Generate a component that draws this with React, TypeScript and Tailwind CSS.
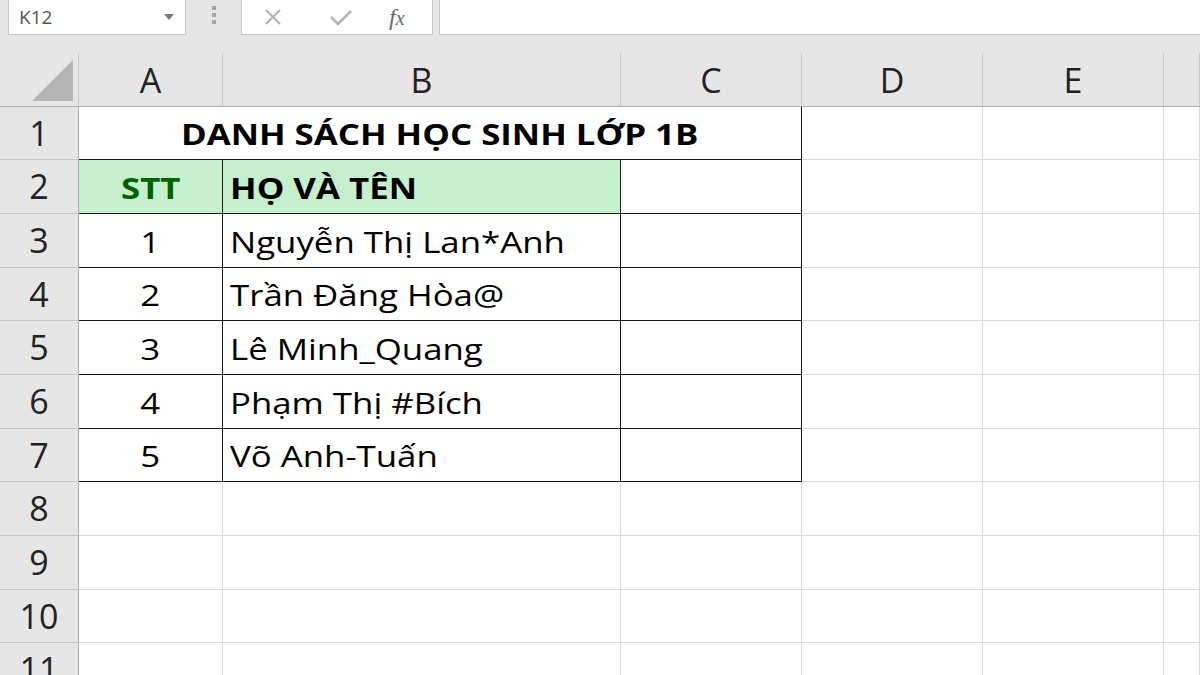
import React from "react";

const HEAD_FONT = { fontFamily: '"Open Sans", "Noto Sans", sans-serif' };
const CELL_FONT = { fontFamily: '"Open Sans", "Noto Sans", sans-serif' };

const rowHeights = ["h-[53px]", "h-[54px]", "h-[54px]", "h-[53px]", "h-[54px]", "h-[54px]", "h-[53px]", "h-[54px]", "h-[54px]", "h-[53px]", "h-[54px]"];

const students = [
  { stt: "1", name: "Nguyễn Thị Lan*Anh" },
  { stt: "2", name: "Trần Đăng Hòa@" },
  { stt: "3", name: "Lê Minh_Quang" },
  { stt: "4", name: "Phạm Thị #Bích" },
  { stt: "5", name: "Võ Anh-Tuấn" },
];

function RowHead({ n }: { n: number }) {
  return (
    <div
      className="w-[79px] shrink-0 flex items-center justify-center bg-[#e6e6e6] border-r border-[#ababab] border-b border-b-[#c4c4c4] text-[34px] text-[#222]"
      style={HEAD_FONT}
    >
      {n}
    </div>
  );
}

// the sheet is zoomed and a bit stretched, so cell text is widened
function Wide({ children, left }: { children: React.ReactNode; left?: boolean }) {
  return (
    <span className={"inline-block whitespace-nowrap scale-x-[1.2] " + (left ? "origin-left" : "origin-center")}>
      {children}
    </span>
  );
}

function EmptyCells({ widths }: { widths: string[] }) {
  return (
    <>
      {widths.map((w, i) => (
        <div key={i} className={w + " shrink-0 border-r border-b border-[#d9d9d9] bg-white"} />
      ))}
    </>
  );
}

export default function App() {
  const tail = ["w-[181px]", "w-[181px]", "w-[181px]"];
  return (
    <div className="w-[1200px] h-[675px] overflow-hidden bg-[#e6e6e6] flex flex-col">
      {/* Formula bar */}
      <div className="h-[36px] flex items-stretch shrink-0">
        <div className="ml-[8px] w-[178px] h-[35px] bg-white border border-t-0 border-[#c6c6c6] flex items-center justify-between px-[10px]">
          <span className="text-[19px] text-[#555]" style={HEAD_FONT}>K12</span>
          <svg width="12" height="8" viewBox="0 0 12 8"><path d="M1 1 L11 1 L6 7 Z" fill="#777" /></svg>
        </div>
        <div className="w-[55px] flex flex-col items-center pt-[6px] gap-[3px]">
          <div className="w-[4px] h-[4px] bg-[#a6a6a6]" />
          <div className="w-[4px] h-[4px] bg-[#a6a6a6]" />
          <div className="w-[4px] h-[4px] bg-[#a6a6a6]" />
        </div>
        <div className="w-[192px] h-[35px] bg-white border border-t-0 border-[#c6c6c6] flex items-center">
          <svg className="ml-[21px]" width="20" height="20" viewBox="0 0 20 20">
            <path d="M3 3 L17 17 M17 3 L3 17" stroke="#b3b3b3" strokeWidth="2" fill="none" />
          </svg>
          <svg className="ml-[46px]" width="24" height="20" viewBox="0 0 24 20">
            <path d="M2 10 L9 17 L22 4" stroke="#b3b3b3" strokeWidth="2.6" fill="none" />
          </svg>
          <span className="ml-[36px] text-[24px] leading-none italic text-[#6b6b6b]" style={{ fontFamily: '"Liberation Serif", serif' }}>
            f<span className="text-[20px]">x</span>
          </span>
        </div>
        <div className="ml-[6px] flex-1 h-[35px] bg-white border-l border-b border-[#c6c6c6]" />
      </div>
      <div className="h-[17px] shrink-0" />

      {/* Column header */}
      <div className="h-[54px] shrink-0 flex border-b border-[#ababab] text-[34px] text-[#222]" style={HEAD_FONT}>
        <div className="w-[79px] shrink-0 relative border-r border-[#c8c8c8]">
          <svg className="absolute left-[32px] top-[7px]" width="42" height="42" viewBox="0 0 42 42">
            <path d="M0 41 L41 0 L41 41 Z" fill="#b4b4b4" />
          </svg>
        </div>
        {[
          ["A", "w-[144px]"],
          ["B", "w-[398px]"],
          ["C", "w-[181px]"],
          ["D", "w-[181px]"],
          ["E", "w-[181px]"],
          ["", "flex-1"],
        ].map(([l, w]) => (
          <div key={l + w} className={w + " shrink-0 flex items-center justify-center pt-[2px] border-r border-[#c8c8c8]"}>
            {l}
          </div>
        ))}
      </div>

      {/* Row 1: title */}
      <div className={rowHeights[0] + " shrink-0 flex"}>
        <RowHead n={1} />
        <div
          className="w-[723px] shrink-0 bg-white border-r border-b border-[#1a1a1a] flex items-center justify-center pt-[2px] text-[29px] font-bold text-black"
          style={CELL_FONT}
        >
          <Wide>DANH SÁCH HỌC SINH LỚP 1B</Wide>
        </div>
        <EmptyCells widths={["w-[181px]", "w-[181px]", "flex-1"]} />
      </div>

      {/* Row 2: headings */}
      <div className={rowHeights[1] + " shrink-0 flex"}>
        <RowHead n={2} />
        <div className="w-[144px] shrink-0 bg-[#c6efce] border-r border-b border-[#1a1a1a] flex items-center justify-center pt-[2px] text-[29px] font-bold text-[#006100]" style={CELL_FONT}>
          <Wide>STT</Wide>
        </div>
        <div className="w-[398px] shrink-0 bg-[#c6efce] border-r border-b border-[#1a1a1a] flex items-center pl-[7px] pt-[2px] text-[29px] font-bold text-black" style={CELL_FONT}>
          <Wide left>HỌ VÀ TÊN</Wide>
        </div>
        <div className="w-[181px] shrink-0 bg-white border-r border-b border-[#1a1a1a]" />
        <EmptyCells widths={["w-[181px]", "w-[181px]", "flex-1"]} />
      </div>

      {/* Rows 3-7: students */}
      {students.map((s, i) => (
        <div key={s.stt} className={rowHeights[i + 2] + " shrink-0 flex"}>
          <RowHead n={i + 3} />
          <div className="w-[144px] shrink-0 bg-white border-r border-b border-[#1a1a1a] flex items-center justify-center pt-[2px] text-[29px] text-black" style={CELL_FONT}>
            <Wide>{s.stt}</Wide>
          </div>
          <div className="w-[398px] shrink-0 bg-white border-r border-b border-[#1a1a1a] flex items-center pl-[7px] pt-[2px] text-[29px] text-black" style={CELL_FONT}>
            <Wide left>{s.name}</Wide>
          </div>
          <div className="w-[181px] shrink-0 bg-white border-r border-b border-[#1a1a1a]" />
          <EmptyCells widths={["w-[181px]", "w-[181px]", "flex-1"]} />
        </div>
      ))}

      {/* Rows 8-11: empty */}
      {[8, 9, 10, 11].map((n, i) => (
        <div key={n} className={rowHeights[i + 7] + " shrink-0 flex"}>
          <RowHead n={n} />
          <EmptyCells widths={["w-[144px]", "w-[398px]", ...tail, "flex-1"]} />
        </div>
      ))}
    </div>
  );
}
